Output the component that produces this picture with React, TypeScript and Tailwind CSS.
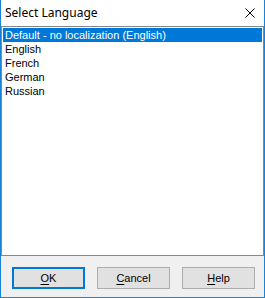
import React from 'react';

const languages = [
  'Default - no localization (English)',
  'English',
  'French',
  'German',
  'Russian',
];

function DialogButton({
  mnemonic,
  rest,
  primary = false,
}: {
  mnemonic: string;
  rest: string;
  primary?: boolean;
}) {
  return (
    <button
      type="button"
      className={
        primary
          ? 'flex h-[22px] w-[73px] items-center justify-center border-2 border-[#0078d7] bg-[#e1e1e1] text-[11px] text-black'
          : 'flex h-[22px] w-[73px] items-center justify-center border border-[#adadad] bg-[#e1e1e1] text-[11px] text-black'
      }
    >
      <span>
        <span className="underline underline-offset-2">{mnemonic}</span>
        {rest}
      </span>
    </button>
  );
}

export default function App() {
  const selected = 0;

  return (
    <div
      className="flex h-[298px] w-[265px] flex-col border-x border-b border-[#1883d7] bg-[#f0f0f0]"
      style={{ fontFamily: '"Liberation Sans", Arial, sans-serif' }}
    >
      {/* Title bar */}
      <div className="flex h-[26px] shrink-0 items-center justify-between bg-white pl-[4px] pr-[9px]">
        <span
          className="text-[12px] text-black"
          style={{ fontFamily: '"Noto Sans", "Open Sans", sans-serif' }}
        >
          Select Language
        </span>
        <svg width="10" height="10" viewBox="0 0 10 10" className="mb-[1px]">
          <path d="M0.5 0.5 L9.5 9.5 M9.5 0.5 L0.5 9.5" stroke="#000" strokeWidth="1" />
        </svg>
      </div>

      {/* List box */}
      <div className="h-[230px] shrink-0 border border-[#828790] bg-white p-[1px]">
        {languages.map((lang, i) => (
          <div
            key={lang}
            className={
              i === selected
                ? 'h-[14px] bg-[#0078d7] pl-[2px] text-[11px] leading-[14px] text-white'
                : 'h-[14px] pl-[2px] text-[11px] leading-[14px] text-black'
            }
          >
            {lang}
          </div>
        ))}
      </div>

      {/* Buttons */}
      <div className="mt-[11px] flex gap-[12px] pl-[11px]">
        <DialogButton mnemonic="O" rest="K" primary />
        <DialogButton mnemonic="C" rest="ancel" />
        <DialogButton mnemonic="H" rest="elp" />
      </div>
    </div>
  );
}
